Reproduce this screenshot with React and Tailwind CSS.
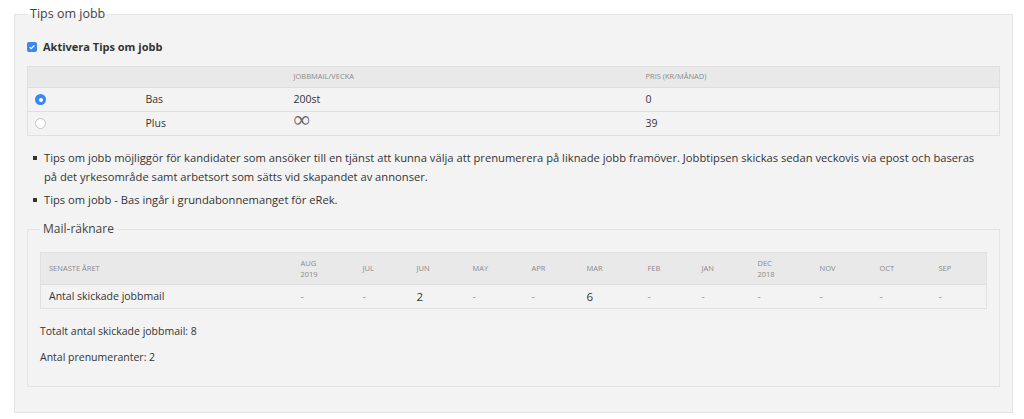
import React from 'react';

const months = [
  { label: 'AUG', year: '2019', value: '-' },
  { label: 'JUL', value: '-' },
  { label: 'JUN', value: '2' },
  { label: 'MAY', value: '-' },
  { label: 'APR', value: '-' },
  { label: 'MAR', value: '6' },
  { label: 'FEB', value: '-' },
  { label: 'JAN', value: '-' },
  { label: 'DEC', year: '2018', value: '-' },
  { label: 'NOV', value: '-' },
  { label: 'OCT', value: '-' },
  { label: 'SEP', value: '-' },
];

const monthCols = [
  'w-[62px]', 'w-[54px]', 'w-[56px]', 'w-[59px]', 'w-[55px]', 'w-[61px]',
  'w-[54px]', 'w-[56px]', 'w-[62px]', 'w-[60px]', 'w-[59px]', '',
];

const plans = [
  { name: 'Bas', mails: '200st', price: '0', checked: true },
  { name: 'Plus', mails: '∞', price: '39', checked: false },
];

const Radio = ({ checked }) =>
  checked ? (
    <span className="flex h-[11px] w-[11px] items-center justify-center rounded-full bg-[#3b86f5]">
      <span className="h-[4px] w-[4px] rounded-full bg-white" />
    </span>
  ) : (
    <span className="block h-[11px] w-[11px] rounded-full border border-[#c4c4c4] bg-white" />
  );

const Bullet = ({ children }) => (
  <div className="flex items-start">
    <span className="ml-[6px] mr-[7px] mt-[8px] h-[4px] w-[4px] shrink-0 bg-[#333]" />
    <p className="max-w-[938px] leading-[19px]">{children}</p>
  </div>
);

export default function App() {
  return (
    <div className="min-h-[419px] bg-white pl-[14px] pr-[11px] pt-[5px] font-['Open_Sans',sans-serif] text-[#333]">
      <fieldset className="border border-[#e4e4e4] bg-[#f3f3f3] px-[12px] pb-[25px]">
        <legend className="px-[3px] text-[12.5px] leading-[18px] text-[#444]">Tips om jobb</legend>

        <label className="mt-[16px] flex items-center gap-[6px]">
          <span className="flex h-[10px] w-[10px] items-center justify-center rounded-[2px] bg-[#3b86f5]">
            <svg viewBox="0 0 10 10" className="h-[8px] w-[8px]" fill="none" stroke="white" strokeWidth="1.5">
              <path d="M2 5.2l2 2L8 3" />
            </svg>
          </span>
          <span className="text-[11px] font-bold leading-[16px] text-[#333]">Aktivera Tips om jobb</span>
        </label>

        <table className="mt-[11px] w-full table-fixed border-collapse border border-[#e0e0e0] text-[10.5px]">
          <colgroup>
            <col className="w-[110px]" />
            <col className="w-[148px]" />
            <col className="w-[352px]" />
            <col />
          </colgroup>
          <thead>
            <tr className="h-[21px] bg-[#e9e9e9] text-left text-[7.5px] uppercase text-[#8a8a8a]">
              <th className="font-normal" />
              <th className="font-normal" />
              <th className="px-2 font-normal">Jobbmail/vecka</th>
              <th className="px-2 font-normal">Pris (kr/månad)</th>
            </tr>
          </thead>
          <tbody>
            {plans.map((p) => (
              <tr key={p.name} className="h-[24px] border-t border-[#dedede]">
                <td className="pl-[7px]">
                  <Radio checked={p.checked} />
                </td>
                <td className="px-2">{p.name}</td>
                <td className="px-2">
                  {p.mails === '∞' ? (
                    <span className="font-['Liberation_Serif',serif] text-[23px] font-normal leading-[0] text-[#666]">∞</span>
                  ) : (
                    p.mails
                  )}
                </td>
                <td className="px-2">{p.price}</td>
              </tr>
            ))}
          </tbody>
        </table>

        <div className="mt-[12px] flex flex-col gap-[4px] text-[11.2px]">
          <Bullet>
            Tips om jobb möjliggör för kandidater som ansöker till en tjänst att kunna välja att prenumerera på liknade jobb framöver. Jobbtipsen skickas sedan veckovis via epost och baseras på det yrkesområde samt arbetsort som sätts vid skapandet av annonser.
          </Bullet>
          <Bullet>Tips om jobb - Bas ingår i grundabonnemanget för eRek.</Bullet>
        </div>

        <fieldset className="mt-[11px] border border-[#e4e4e4] px-[12px] pb-[20px]">
          <legend className="px-[3px] text-[12px] leading-[18px] text-[#444]">Mail-räknare</legend>

          <table className="mt-[14px] w-full table-fixed border-collapse border border-[#e0e0e0]">
            <colgroup>
              <col className="w-[252px]" />
              {monthCols.map((c, i) => (
                <col key={i} className={c} />
              ))}
            </colgroup>
            <thead>
              <tr className="h-[32px] bg-[#e9e9e9] text-left text-[7.5px] uppercase leading-[11px] text-[#8a8a8a]">
                <th className="px-2 font-normal">Senaste året</th>
                {months.map((m) => (
                  <th key={m.label} className="px-2 font-normal">
                    {m.label}
                    {m.year && (
                      <>
                        <br />
                        {m.year}
                      </>
                    )}
                  </th>
                ))}
              </tr>
            </thead>
            <tbody>
              <tr className="h-[24px] border-t border-[#dedede]">
                <td className="px-2 text-[10.5px]">Antal skickade jobbmail</td>
                {months.map((m) => (
                  <td
                    key={m.label}
                    className={m.value === '-' ? 'px-2 text-[10px] text-[#999]' : 'px-2 text-[11.5px] text-[#333]'}
                  >
                    {m.value}
                  </td>
                ))}
              </tr>
            </tbody>
          </table>

          <p className="mt-[13px] text-[10.5px] leading-[18px]">Totalt antal skickade jobbmail: 8</p>
          <p className="mt-[8px] text-[10.5px] leading-[18px]">Antal prenumeranter: 2</p>
        </fieldset>
      </fieldset>
    </div>
  );
}
